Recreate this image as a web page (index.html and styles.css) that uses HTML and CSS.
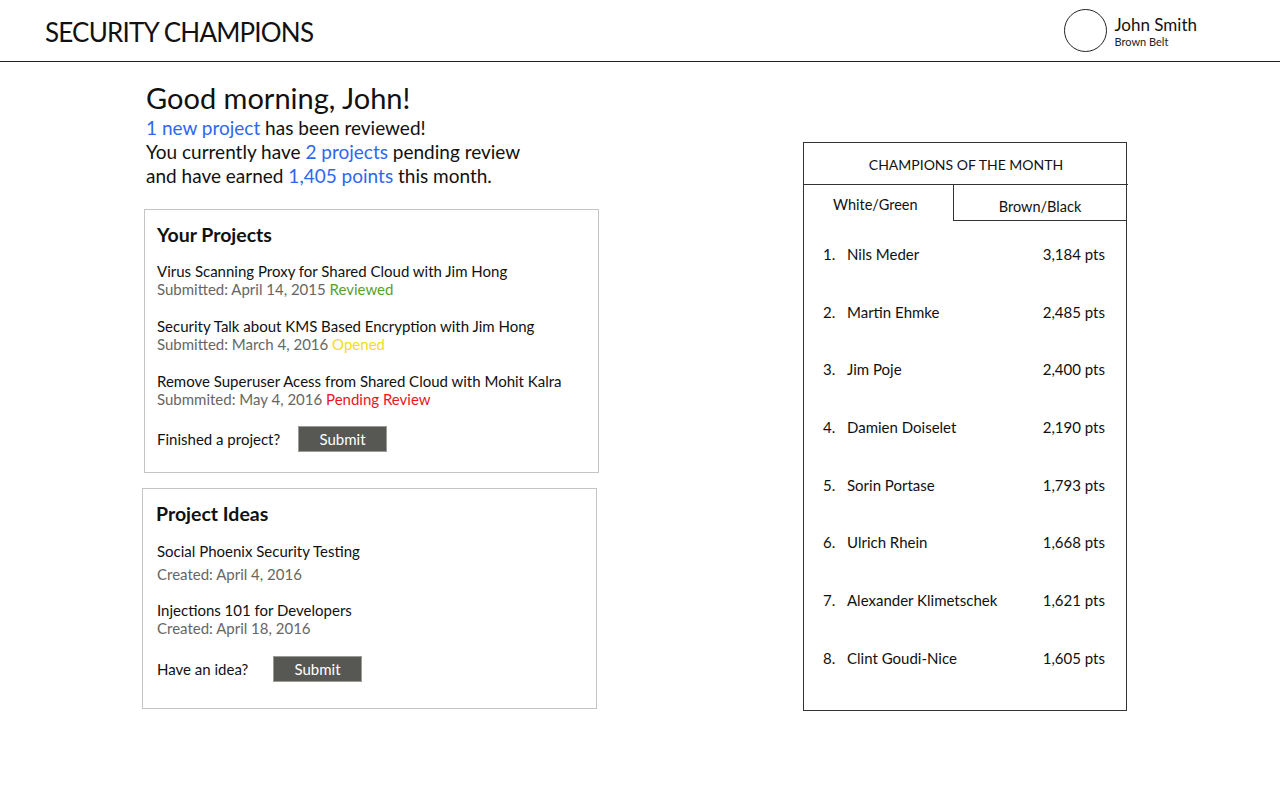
FILE: index.html
```html
<!DOCTYPE html>
<html lang="en">
<head>
<meta charset="utf-8">
<title>Security Champions</title>
<link rel="stylesheet" href="styles.css">
</head>
<body>
<header class="topbar">
  <div class="brand">SECURITY CHAMPIONS</div>
  <div class="user">
    <div class="avatar"></div>
    <div class="user-info">
      <div class="user-name">John Smith</div>
      <div class="user-rank">Brown Belt</div>
    </div>
  </div>
</header>
<main class="main">
  <section class="left">
    <div class="greeting">
      <h1 class="hello">Good morning, John!</h1>
      <p class="line"><span class="hl">1 new project</span> has been reviewed!</p>
      <p class="line">You currently have <span class="hl">2 projects</span> pending review</p>
      <p class="line">and have earned <span class="hl">1,405 points</span> this month.</p>
    </div>
    <div class="card card-projects">
      <h2 class="card-title">Your Projects</h2>
      <div class="item">
        <div class="item-title">Virus Scanning Proxy for Shared Cloud with Jim Hong</div>
        <div class="item-meta">Submitted: April 14, 2015 <span class="st-green">Reviewed</span></div>
      </div>
      <div class="item">
        <div class="item-title">Security Talk about KMS Based Encryption with Jim Hong</div>
        <div class="item-meta">Submitted: March 4, 2016 <span class="st-yellow">Opened</span></div>
      </div>
      <div class="item">
        <div class="item-title">Remove Superuser Acess from Shared Cloud with Mohit Kalra</div>
        <div class="item-meta">Submmited: May 4, 2016 <span class="st-red">Pending Review</span></div>
      </div>
      <div class="action">
        <span class="action-label">Finished a project?</span>
        <button class="btn">Submit</button>
      </div>
    </div>
    <div class="card card-ideas">
      <h2 class="card-title">Project Ideas</h2>
      <div class="idea">
        <div class="item-title">Social Phoenix Security Testing</div>
        <div class="item-meta idea-meta-wide">Created: April 4, 2016</div>
      </div>
      <div class="idea">
        <div class="item-title">Injections 101 for Developers</div>
        <div class="item-meta">Created: April 18, 2016</div>
      </div>
      <div class="action action-ideas">
        <span class="action-label">Have an idea?</span>
        <button class="btn">Submit</button>
      </div>
    </div>
  </section>
  <aside class="champions">
    <div class="champ-head">CHAMPIONS OF THE MONTH</div>
    <div class="tabs">
      <div class="tab tab-active">White/Green</div>
      <div class="tab tab-other">Brown/Black</div>
    </div>
    <ol class="rank-list">
      <li class="rank"><span class="num">1.</span><span class="name">Nils Meder</span><span class="pts">3,184 pts</span></li>
      <li class="rank"><span class="num">2.</span><span class="name">Martin Ehmke</span><span class="pts">2,485 pts</span></li>
      <li class="rank"><span class="num">3.</span><span class="name">Jim Poje</span><span class="pts">2,400 pts</span></li>
      <li class="rank"><span class="num">4.</span><span class="name">Damien Doiselet</span><span class="pts">2,190 pts</span></li>
      <li class="rank"><span class="num">5.</span><span class="name">Sorin Portase</span><span class="pts">1,793 pts</span></li>
      <li class="rank"><span class="num">6.</span><span class="name">Ulrich Rhein</span><span class="pts">1,668 pts</span></li>
      <li class="rank"><span class="num">7.</span><span class="name">Alexander Klimetschek</span><span class="pts">1,621 pts</span></li>
      <li class="rank"><span class="num">8.</span><span class="name">Clint Goudi-Nice</span><span class="pts">1,605 pts</span></li>
    </ol>
  </aside>
</main>
</body>
</html>
```
FILE: styles.css
```css
* { box-sizing: border-box; }
html, body { margin: 0; padding: 0; background: #fff; }
body {
  font-family: Lato, "Open Sans", "Liberation Sans", sans-serif;
  color: #111;
  width: 1280px;
  height: 800px;
  overflow: hidden;
}
.topbar {
  height: 62px;
  border-bottom: 1px solid #222;
  display: flex;
  align-items: center;
  justify-content: space-between;
  padding: 0 83px 0 45px;
}
.brand {
  font-size: 26px;
  letter-spacing: -0.8px;
  color: #111;
  padding-top: 2px;
}
.user {
  display: flex;
  align-items: center;
  gap: 7px;
}
.avatar {
  width: 43px;
  height: 43px;
  border: 1.5px solid #222;
  border-radius: 50%;
}
.user-info { display: flex; flex-direction: column; padding-top: 2px; }
.user-name { font-size: 17px; line-height: 20px; }
.user-rank { font-size: 11px; line-height: 14px; color: #222; }

.main {
  display: flex;
  padding: 18px 0 0 142px;
}
.left { width: 457px; }
.greeting { padding-left: 4px; }
.hello {
  margin: 0;
  font-weight: 400;
  font-size: 29px;
  line-height: 36px;
}
.line {
  margin: 0;
  font-size: 19px;
  line-height: 24px;
}
.hl { color: #2f67f0; }

.card {
  border: 1px solid #c4c4c4;
  padding: 12px 12px 0 12px;
}
.card-projects {
  margin: 21px 0 0 2px;
  width: 455px;
  height: 264px;
}
.card-ideas {
  margin: 15px 0 0 0;
  width: 455px;
  height: 221px;
  padding-left: 14px;
}
.card-title {
  margin: 0;
  font-size: 19.5px;
  font-weight: 700;
  line-height: 26px;
}
.card-ideas .card-title { margin-left: -1px; }
.item { margin-top: 14px; }
.item + .item { margin-top: 19px; }
.item-title { font-size: 15px; line-height: 18px; color: #111; }
.item-meta { font-size: 15px; line-height: 18px; color: #666; }
.st-green { color: #5aa02c; }
.st-yellow { color: #f2dc1c; }
.st-red { color: #e8161d; }

.action {
  display: flex;
  align-items: center;
  margin-top: 18px;
}
.action-label { font-size: 15px; width: 141px; }
.action-ideas .action-label { width: 116px; }
.btn {
  width: 89px;
  height: 26px;
  border: 1px solid #9a9a96;
  background: #575753;
  color: #fff;
  font-family: inherit;
  font-size: 15px;
  padding: 0;
}

.idea { margin-top: 15px; }
.idea-meta-wide { margin-top: 5px; }
.idea + .idea { margin-top: 18px; }
.action-ideas { margin-top: 19px; }

.champions {
  margin: 62px 0 0 204px;
  width: 324px;
  height: 569px;
  border: 1px solid #333;
  display: flex;
  flex-direction: column;
}
.champ-head {
  height: 42px;
  border-bottom: 1px solid #333;
  margin-right: -2px;
  text-align: center;
  font-size: 14px;
  line-height: 43px;
}
.tabs { display: flex; height: 36px; }
.tab { font-size: 14.5px; }
.tab-active { width: 149px; line-height: 40px; padding-left: 29px; }
.tab-other {
  flex: 1;
  text-align: center;
  border-left: 1px solid #333;
  border-bottom: 1px solid #333;
  line-height: 44px;
}
.rank-list {
  list-style: none;
  margin: 0;
  padding: 24px 21px 0 19px;
}
.rank {
  display: flex;
  height: 57.7px;
  font-size: 15px;
  line-height: 18px;
}
.num { width: 24px; }
.name { flex: 1; }
.pts { text-align: right; }
```
